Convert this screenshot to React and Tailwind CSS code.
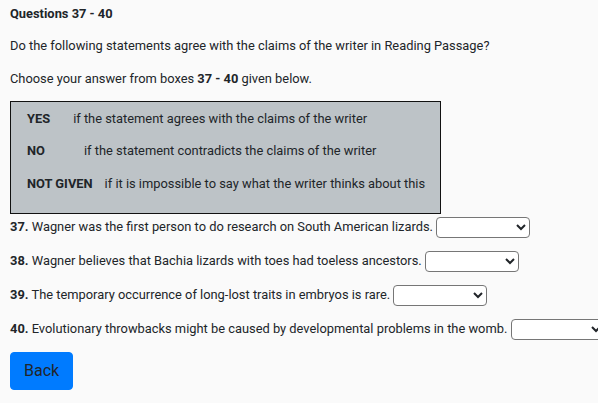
import React from "react";

const statements = [
  { n: 37, text: "Wagner was the first person to do research on South American lizards." },
  { n: 38, text: "Wagner believes that Bachia lizards with toes had toeless ancestors." },
  { n: 39, text: "The temporary occurrence of long-lost traits in embryos is rare." },
  { n: 40, text: "Evolutionary throwbacks might be caused by developmental problems in the womb." },
];

const Answer = () => (
  <select className="w-[94px] h-[21px] align-middle border border-[#767676] rounded-[4px] bg-white text-[13px]">
    <option value=""></option>
    <option value="YES">YES</option>
    <option value="NO">NO</option>
    <option value="NOT GIVEN">NOT GIVEN</option>
  </select>
);

const App = () => {
  return (
    <div
      className="min-h-screen bg-[#fafafa] text-[#212529] text-[12.87px] leading-[1.5] px-[10px] pt-[4px] pb-[2px]"
      style={{ fontFamily: "Roboto, 'Liberation Sans', sans-serif" }}
    >
      <p className="font-bold mb-[13px]">Questions 37 - 40</p>
      <p className="mb-[13px]">
        Do the following statements agree with the claims of the writer in Reading Passage?
      </p>
      <p className="mb-[13px]">
        Choose your answer from boxes <b>37 - 40</b> given below.
      </p>

      <div className="w-[431px] bg-[#bdc3c7] border-[1.5px] border-[#111] pt-[7px] pb-[7px] pl-[16px] whitespace-nowrap">
        <p className="mb-[13px]">
          <b>YES</b>
          <span className="ml-[23px]">if the statement agrees with the claims of the writer</span>
        </p>
        <p className="mb-[13px]">
          <b>NO</b>
          <span className="ml-[39px]">if the statement contradicts the claims of the writer</span>
        </p>
        <p className="mb-[13px]">
          <b>NOT GIVEN</b>
          <span className="ml-[12px]">if it is impossible to say what the writer thinks about this</span>
        </p>
      </div>

      <div className="whitespace-nowrap pt-[2px]">
        {statements.map((s) => (
          <p key={s.n} className="mb-[13px] h-[21px] leading-[21px]">
            <b>{s.n}.</b> {s.text} <Answer />
          </p>
        ))}
      </div>

      <button className="bg-[#007bff] text-[#212529] text-[16px] leading-[24px] px-[13px] py-[6px] border border-[#007bff] rounded-[4px]">
        Back
      </button>
    </div>
  );
};

export default App;
